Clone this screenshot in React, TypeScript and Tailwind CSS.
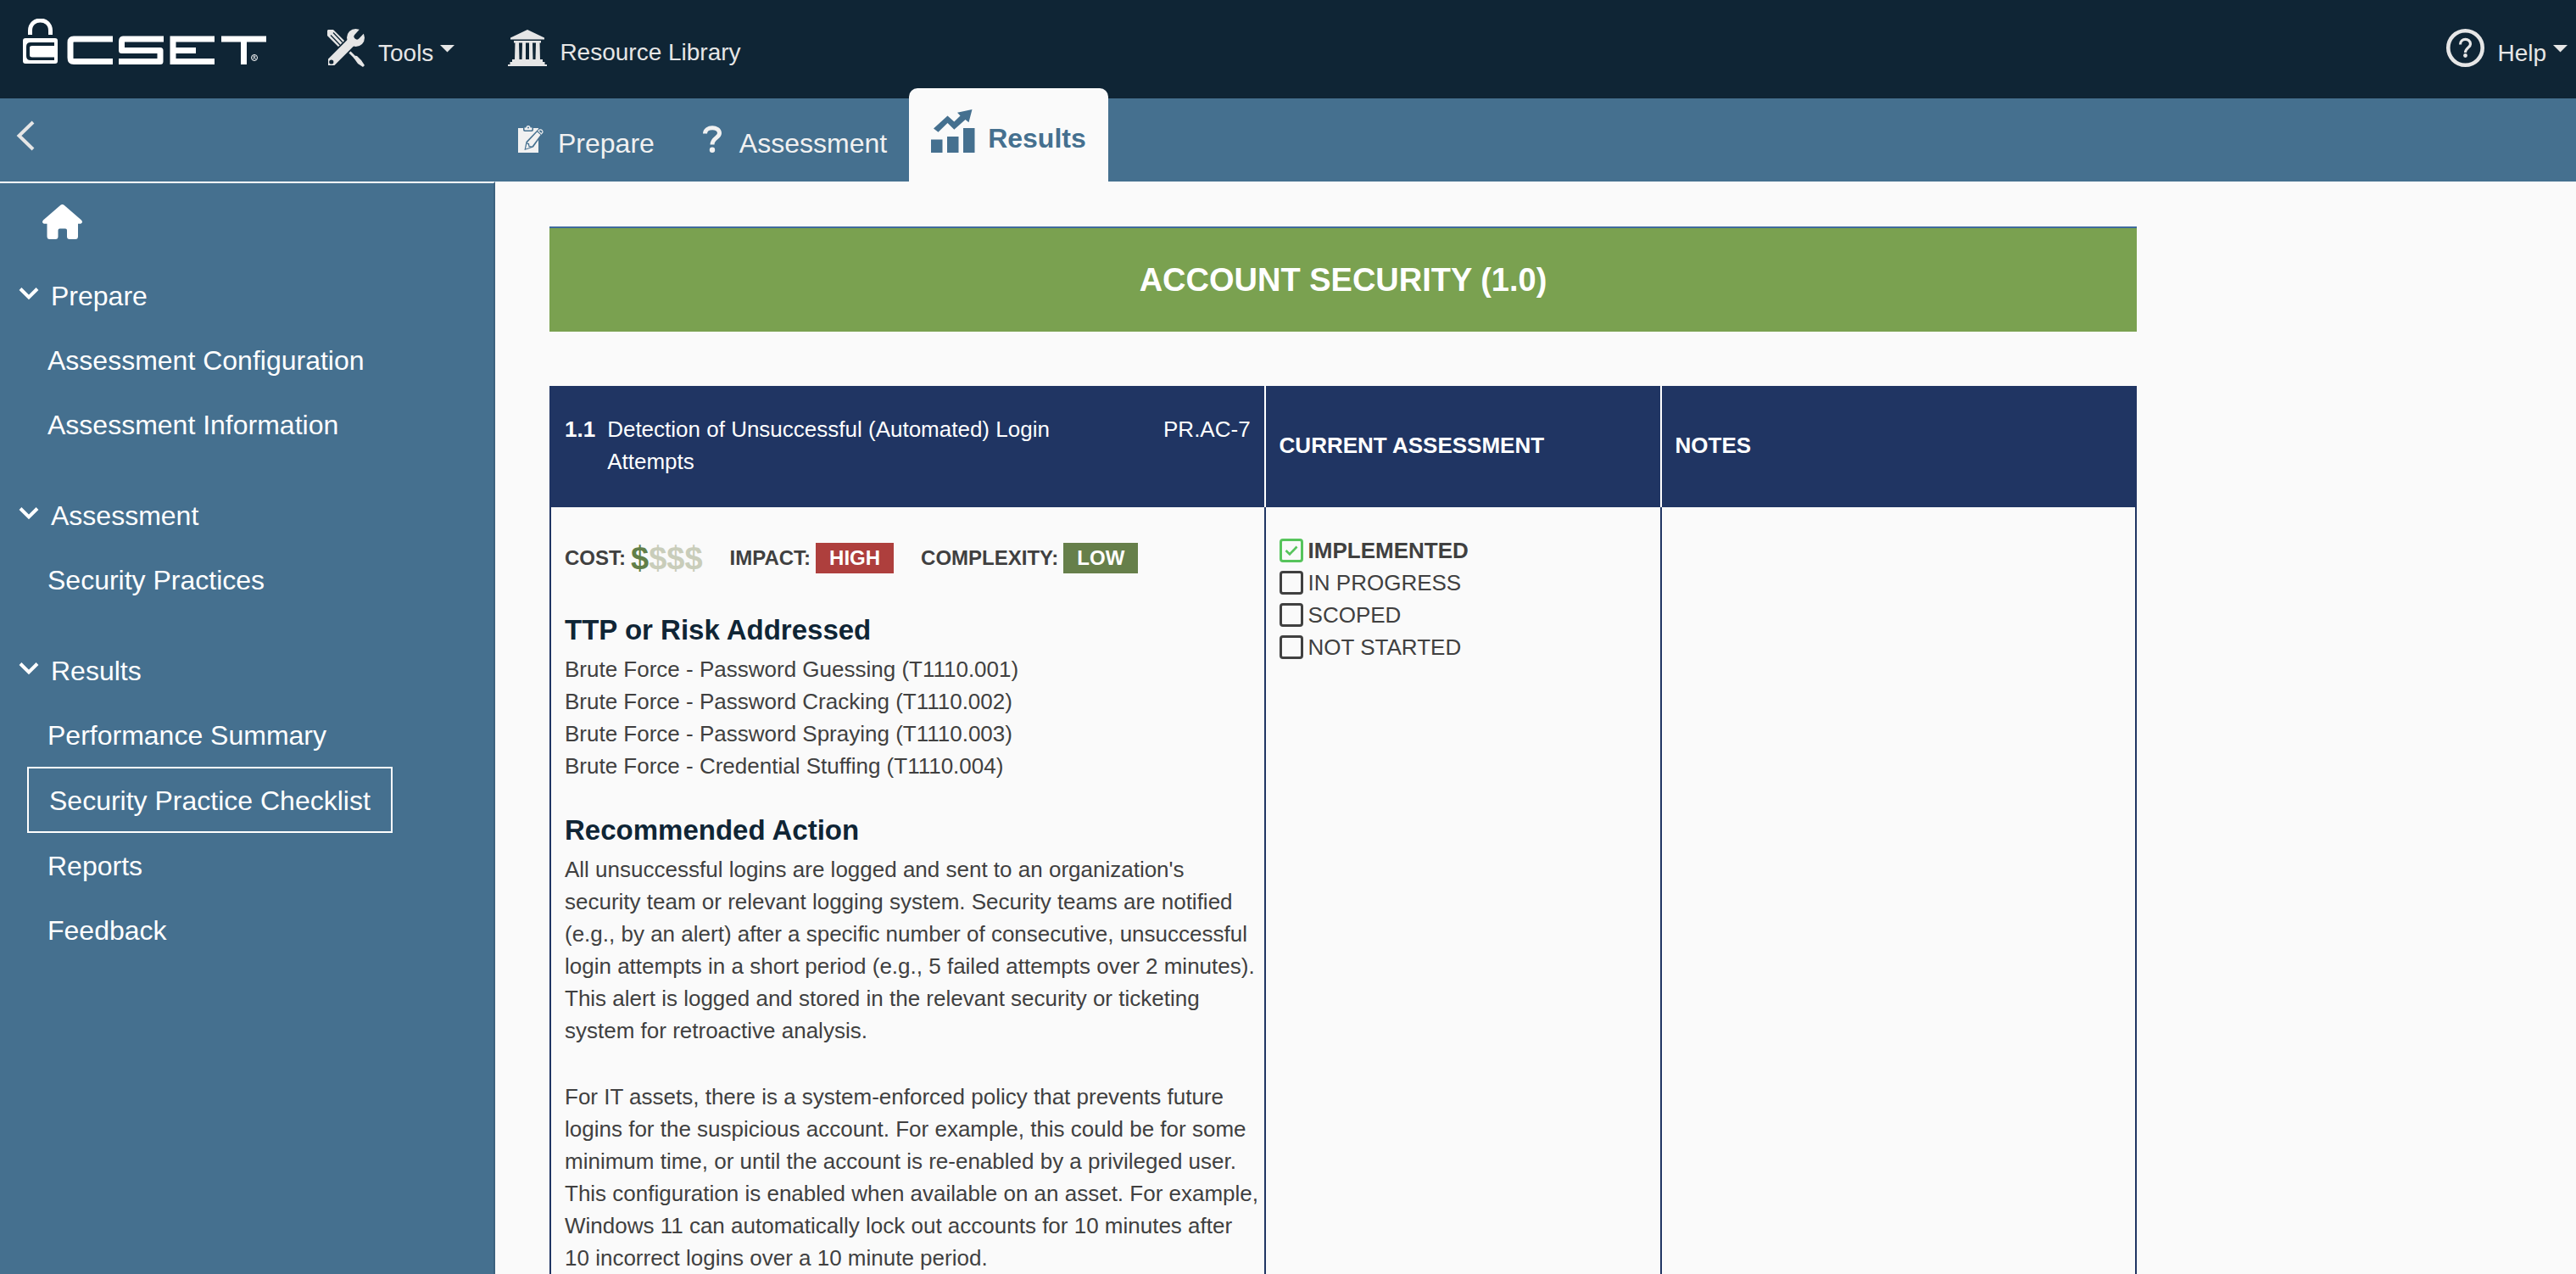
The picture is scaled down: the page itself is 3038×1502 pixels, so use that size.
import React from "react";

function Logo() {
  return (
    <svg className="h-[56px] w-[290px]" viewBox="0 0 290 56" fill="none" role="img" aria-label="CSET">
      <path d="M8.500 19V14C8.500 -2 32.500 -2 32.500 14V19" stroke="#fff" strokeWidth="5" />
      <path
        fillRule="evenodd"
        fill="#fff"
        d="M3 23H38Q41 23 41 26V50Q41 53 38 53H3Q0 53 0 50V26Q0 23 3 23ZM37 28H9Q4 28 4 33V44Q4 49 9 49H37V45.500H11Q8 45.500 8 43V34Q8 32 11 32H37Z"
      />
      <g stroke="#fff" strokeWidth="7" strokeLinejoin="round">
        <path d="M106 24H60Q56 24 56 28V46Q56 50.500 60 50.500H106" />
        <path d="M166 24H118Q116.500 24 116.500 27V37.500H162V50.500H113" />
        <path d="M226 24H177V50.500H226M177 37.500H204" strokeLinejoin="miter" />
        <path d="M234 24H287M260.500 24V54" strokeLinejoin="miter" />
      </g>
      <circle cx="273" cy="46" r="3.500" stroke="#fff" />
      <path d="M272 48V44H273.500Q275 45 273 46L275 48" stroke="#fff" strokeWidth="0.800" />
    </svg>
  );
}

function ToolsIcon() {
  return (
    <svg className="size-[45px]" viewBox="0 0 45 45" fill="none" aria-hidden="true">
      <mask id="wrench-cut">
        <rect width="45" height="45" fill="#fff" />
        <path d="M36 9L48 -4" stroke="#000" strokeWidth="7" strokeLinecap="round" />
        <circle cx="5.800" cy="39" r="2.600" fill="#000" />
      </mask>
      <mask id="driver-cut">
        <rect width="45" height="45" fill="#fff" />
        <path d="M5.500 39.500L33 12" stroke="#000" strokeWidth="14" />
        <path d="M5 7.500L16 19M8 4.500L19 16" stroke="#000" strokeWidth="1.300" />
      </mask>
      <g mask="url(#driver-cut)">
        <path d="M5 5L20 20" stroke="#e6e6e6" strokeWidth="10" strokeLinecap="round" />
        <path d="M26 26L34 34" stroke="#e6e6e6" strokeWidth="3" />
        <path d="M32 34Q33 31 36 32L41 37L45 43L43 45L37 41Z" fill="#e6e6e6" />
      </g>
      <g mask="url(#wrench-cut)">
        <path d="M5.500 39.500L31 14" stroke="#e6e6e6" strokeWidth="10.500" strokeLinecap="round" />
        <circle cx="34.500" cy="10.500" r="10.500" fill="#e6e6e6" />
      </g>
    </svg>
  );
}

function LibraryIcon() {
  return (
    <svg className="h-[43px] w-[46px]" viewBox="0 0 46 43" fill="#e6e6e6" aria-hidden="true">
      <path d="M23 0L43 9.500V11.500H3V9.500Z" />
      <path d="M7 13H39V15.500H7ZM8.500 15H13L13.500 36H8ZM17 15H21V36H16.500ZM25 15H29L29.500 36H25ZM33 15H37.500L38 36H32.500Z" />
      <path d="M5 35H41V38H43.500V41H46V43H0V41H2.500V38H5Z" />
    </svg>
  );
}

function HelpIcon() {
  return (
    <svg className="size-[45px]" viewBox="0 0 45 45" fill="none" aria-hidden="true">
      <circle cx="22.500" cy="22.500" r="20.200" stroke="#e6e6e6" strokeWidth="4.600" />
      <path d="M16.500 18.500C16.500 10.500 28.500 10.500 28.500 18C28.500 22 22.500 22.500 22.500 28" stroke="#e6e6e6" strokeWidth="3.200" />
      <circle cx="22.500" cy="31.500" r="2.400" fill="#e6e6e6" />
    </svg>
  );
}

function Caret() {
  return (
    <svg className="mb-[17px] h-[9px] w-[17px]" viewBox="0 0 17 9" fill="#e6e6e6" aria-hidden="true">
      <path d="M0 0H17L8.500 8.500Z" />
    </svg>
  );
}

function ClipboardIcon() {
  return (
    <svg className="h-[32px] w-[30px]" viewBox="0 0 30 32" fill="none" aria-hidden="true">
      <path d="M0 3H24V32H0Z" fill="#f1f1f1" />
      <path d="M6 1.500H18V5Q18 7 16 7H8Q6 7 6 5Z" fill="#45708f" />
      <path d="M7.500 2.500H9.500Q9.500 0 12 0Q14.500 0 14.500 2.500H16.500V4.500Q16.500 5.500 15.500 5.500H8.500Q7.500 5.500 7.500 4.500Z" fill="#f1f1f1" />
      <circle cx="12" cy="2.500" r="1" fill="#45708f" />
      <path d="M24 4L30 8.500L18 25.500L7.500 29L9.500 19Z" fill="#45708f" />
      <path d="M22.500 7.500L26.500 11L16.500 24.500L13.500 24L13 21L10.500 20.500Z" fill="#f1f1f1" />
      <path d="M10.300 21.500L12 22.500L12.500 25.200L15 25.500L9 27.500Z" fill="#f1f1f1" />
      <path d="M24 6.300L25.500 5Q27 4.500 28.500 6Q29.500 7.500 28.500 8.500L27.500 9.800Z" stroke="#f1f1f1" strokeWidth="1.200" />
    </svg>
  );
}

function QuestionIcon() {
  return (
    <svg className="h-[32px] w-[22px]" viewBox="0 0 22 32" fill="none" aria-hidden="true">
      <path d="M2.500 9.500C2.500 0.500 19.500 0.500 19.500 9C19.500 14.500 11 14.500 11 22.500" stroke="#f1f1f1" strokeWidth="5" />
      <circle cx="11" cy="28.700" r="3.200" fill="#f1f1f1" />
    </svg>
  );
}

function ChartIcon() {
  return (
    <svg className="h-[51px] w-[52px]" viewBox="0 0 52 51" fill="#45708f" aria-hidden="true">
      <path d="M0 35.500H13.500V51H0ZM19 32H32.500V51H19ZM38 22H51.500V51H38Z" />
      <path d="M3 22.500L19.500 7.500L27.300 14.500L34.500 7.500L31 3.700L48.500 0L44.500 15.300L40.500 12L27.300 23.700L19.500 16L8.500 26.700Z" />
    </svg>
  );
}

function HomeIcon() {
  return (
    <svg className="h-[41px] w-[47px]" viewBox="0 0 47 41" fill="#fff" aria-hidden="true">
      <path d="M25.500 0.800L46 18.500Q48 21 46 22.300Q45.500 22.800 44 22.800H42V37.500Q42 41 39 41H32Q29 41 29 38V30.500Q29 28.500 27 28.500H20.500Q18.500 28.500 18.500 30.500V38Q18.500 41 15.500 41H8.500Q5.500 41 5.500 37.500V22.800H3Q1.500 22.800 1 22.300Q-1 21 1 18.500L21.500 0.800Q23.500 -0.700 25.500 0.800Z" />
    </svg>
  );
}

function ChevronDown() {
  return (
    <svg className="h-[16px] w-[24px]" viewBox="0 0 24 16" fill="none" aria-hidden="true">
      <path d="M2 2.500L12 12.500L22 2.500" stroke="#fff" strokeWidth="4" />
    </svg>
  );
}

const navGroups = [
  { title: "Prepare", items: ["Assessment Configuration", "Assessment Information"] },
  { title: "Assessment", items: ["Security Practices"] },
  { title: "Results", items: ["Performance Summary", "Security Practice Checklist", "Reports", "Feedback"] },
];
const activeItem = "Security Practice Checklist";

const risks = [
  "Brute Force - Password Guessing (T1110.001)",
  "Brute Force - Password Cracking (T1110.002)",
  "Brute Force - Password Spraying (T1110.003)",
  "Brute Force - Credential Stuffing (T1110.004)",
];

const statuses = ["IMPLEMENTED", "IN PROGRESS", "SCOPED", "NOT STARTED"];

function StatusBox({ label }: { label: string }) {
  const [checked, setChecked] = React.useState(label === "IMPLEMENTED");
  return (
    <label className={checked ? "flex items-center gap-[6px] font-bold" : "flex items-center gap-[6px]"}>
      <span className="grid size-7 place-items-center">
        <input
          type="checkbox"
          checked={checked}
          onChange={(e) => setChecked(e.target.checked)}
          className="col-start-1 row-start-1 size-7 appearance-none rounded-[4px] border-3 border-[#404040] checked:border-[#57c45c]"
        />
        {checked && (
          <svg className="pointer-events-none col-start-1 row-start-1 size-4" viewBox="0 0 16 16" fill="none" aria-hidden="true">
            <path d="M1.500 8L6 12.500L14.500 3.500" stroke="#57c45c" strokeWidth="2.600" />
          </svg>
        )}
      </span>
      {label}
    </label>
  );
}

export default function App() {
  return (
    <div className="flex h-screen flex-col overflow-hidden bg-[#fafafa] font-['Liberation_Sans',Arial,sans-serif] text-[#404040]">
      <header className="flex h-[116px] shrink-0 items-center bg-[#0f2535] pr-[10px] pb-1 pl-[27px] text-[28px] leading-8 text-[#e6e6e6]">
        <a href="#home" className="mr-[68px] pb-3">
          <Logo />
        </a>
        <button type="button" className="mr-[63px] flex items-end gap-2">
          <span className="flex items-end gap-4">
            <ToolsIcon />
            Tools
          </span>
          <Caret />
        </button>
        <a href="#library" className="flex items-end gap-[15px]">
          <LibraryIcon />
          Resource Library
        </a>
        <button type="button" className="ml-auto flex items-end gap-2">
          <span className="flex items-end gap-[15px]">
            <HelpIcon />
            Help
          </span>
          <Caret />
        </button>
      </header>

      <div className="flex h-[98px] shrink-0 items-end bg-[#45708f] text-[32px] leading-9 text-[#f1f1f1]">
        <div className="w-[611px] self-start pt-[26px] pl-[18px]">
          <button type="button" aria-label="Collapse menu" className="block">
            <svg className="h-[36px] w-[23px]" viewBox="0 0 23 36" fill="none" aria-hidden="true">
              <path d="M21 2L4.500 18L21 34" stroke="#e6e6e6" strokeWidth="4" />
            </svg>
          </button>
        </div>
        <nav className="flex items-end">
          <a href="#prepare" className="flex items-end gap-[17px] pb-[27px]">
            <span className="pb-[7px]">
              <ClipboardIcon />
            </span>
            Prepare
          </a>
          <a href="#assessment" className="flex items-end gap-[21px] pr-[26px] pb-[27px] pl-[57px]">
            <span className="pb-[7px]">
              <QuestionIcon />
            </span>
            Assessment
          </a>
          <a href="#results" aria-current="page" className="flex h-[110px] items-end rounded-t-[10px] bg-[#fafafa] px-[26px] pb-[33px] font-bold text-[#45708f]">
            <span className="flex items-end gap-[15px]">
              <span className="h-[52px]">
                <ChartIcon />
              </span>
              Results
            </span>
          </a>
        </nav>
      </div>

      <div className="flex min-h-0 flex-1">
        <nav className="w-[584px] shrink-0 border-t-2 border-r-2 border-t-white border-r-[#3c627f] bg-[#45708f] text-[32px] leading-9 text-white">
          <div className="h-[94px] pt-[25px] pl-[50px]">
            <a href="#home" aria-label="Home" className="inline-block">
              <HomeIcon />
            </a>
          </div>
          <div className="flex flex-col gap-[31px]">
            {navGroups.map((group) => (
              <section key={group.title}>
                <button type="button" aria-expanded="true" className="flex h-[76px] items-center gap-[14px] pt-0.5 pl-[22px]">
                  <span className="pb-[6px]">
                    <ChevronDown />
                  </span>
                  {group.title}
                </button>
                <ul className="flex flex-col items-start pl-[32px]">
                  {group.items.map((item) => (
                    <li key={item}>
                      <a
                        href="#item"
                        aria-current={item === activeItem ? "page" : undefined}
                        className={
                          item === activeItem
                            ? "flex h-[78px] items-center border-2 border-white px-6 pt-0.5"
                            : "flex h-[76px] items-center px-6 pt-0.5"
                        }
                      >
                        {item}
                      </a>
                    </li>
                  ))}
                </ul>
              </section>
            ))}
          </div>
        </nav>

        <main className="flex-1 overflow-y-auto px-16 pt-[53px] text-[26px] leading-[38px] [scrollbar-width:none]">
          <div className="max-w-[1872px]">
            <h1 className="flex h-[124px] items-center justify-center border-t-2 border-[#3f6a9c] bg-[#7aa150] text-[38px] font-bold text-white">
              ACCOUNT SECURITY (1.0)
            </h1>
            <table className="mt-16 w-full table-fixed border-separate border-spacing-0 border-x-2 border-[#203563] text-left">
              <thead className="bg-[#203563] text-white">
                <tr className="h-[143px]">
                  <th scope="col" className="w-[45%] px-4 pb-1 font-normal">
                    <div className="flex items-start">
                      <span className="mr-[14px] font-bold">1.1</span>
                      <span className="flex-1 pr-8">Detection of Unsuccessful (Automated) Login Attempts</span>
                      <span>PR.AC-7</span>
                    </div>
                  </th>
                  <th scope="col" className="w-[25%] border-l-2 border-white px-4 pb-1">CURRENT ASSESSMENT</th>
                  <th scope="col" className="w-[30%] border-l-2 border-white px-4 pb-1">NOTES</th>
                </tr>
              </thead>
              <tbody className="align-top">
                <tr>
                  <td className="pt-10 pr-1 pb-8 pl-4">
                    <div className="flex h-10 items-center text-[24px] font-bold">
                      COST:
                      <span className="ml-[6px] text-[38px] text-[#627f49]">
                        $<span className="text-[#c9cdba]">$$$</span>
                      </span>
                      <span className="ml-8">IMPACT:</span>
                      <span className="ml-[6px] bg-[#ae3f3d] px-4 leading-9 text-white">HIGH</span>
                      <span className="ml-8">COMPLEXITY:</span>
                      <span className="ml-[6px] bg-[#667f4a] px-4 leading-9 text-white">LOW</span>
                    </div>
                    <h2 className="mt-[45px] text-[33px] leading-[40px] font-bold text-[#0f2535]">TTP or Risk Addressed</h2>
                    <ul className="mt-[7px]">
                      {risks.map((risk) => (
                        <li key={risk}>{risk}</li>
                      ))}
                    </ul>
                    <h2 className="mt-[37px] text-[33px] leading-[40px] font-bold text-[#0f2535]">Recommended Action</h2>
                    <p className="mt-[7px]">
                      All unsuccessful logins are logged and sent to an organization's security team or relevant logging system.
                      Security teams are notified (e.g., by an alert) after a specific number of consecutive, unsuccessful login
                      attempts in a short period (e.g., 5 failed attempts over 2 minutes). This alert is logged and stored in the
                      relevant security or ticketing system for retroactive analysis.
                    </p>
                    <p className="mt-10">
                      For IT assets, there is a system-enforced policy that prevents future logins for the suspicious account. For
                      example, this could be for some minimum time, or until the account is re-enabled by a privileged user. This
                      configuration is enabled when available on an asset. For example, Windows 11 can automatically lock out
                      accounts for 10 minutes after 10 incorrect logins over a 10 minute period.
                    </p>
                  </td>
                  <td className="border-l-2 border-[#203563] px-4 pt-8">
                    {statuses.map((status) => (
                      <StatusBox key={status} label={status} />
                    ))}
                  </td>
                  <td className="border-l-2 border-[#203563] px-4" />
                </tr>
              </tbody>
            </table>
          </div>
        </main>
      </div>
    </div>
  );
}
